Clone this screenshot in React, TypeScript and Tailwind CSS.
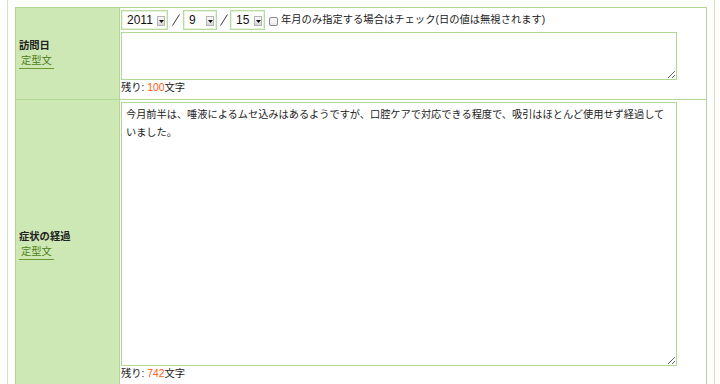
import React from "react";

const FONT = { fontFamily: '"Liberation Sans", "Noto Sans CJK JP", sans-serif' };

function Sel({ value, w }: { value: string; w: string }) {
  return (
    <div className={`relative h-[20px] ${w} border border-[#b9dba0] bg-white flex items-center`}>
      <div className="absolute inset-0 border border-[#e6f2dc] pointer-events-none" />
      <span className="pl-[5px] text-[12px] leading-none text-[#111]">{value}</span>
      <span className="absolute right-[2px] top-[5px] w-[8px] h-[10px] bg-gradient-to-b from-[#fbfbfb] to-[#d6d6d6] border border-[#b4b4b4] flex items-center justify-center">
        <svg width="5" height="3" viewBox="0 0 5 3">
          <path d="M0 0 L5 0 L2.5 3 Z" fill="#111" />
        </svg>
      </span>
    </div>
  );
}

function Slash({ w }: { w: string }) {
  return (
    <span className={`${w} flex justify-center`}>
      <svg width="8" height="12" viewBox="0 0 8 12">
        <path d="M7.5 0.5 L0.5 11.5" stroke="#333" strokeWidth="1" fill="none" />
      </svg>
    </span>
  );
}

function Remain({ n }: { n: string }) {
  return (
    <div className="text-[10.3px] leading-[16px] text-[#222]">
      残り: <span className="text-[#ff5a0a]">{n}</span>文字
    </div>
  );
}

function Label({ title }: { title: string }) {
  return (
    <div className="flex flex-col">
      <span className="text-[10.3px] font-bold leading-[15px] text-[#222] pl-[3px]">{title}</span>
      <span className="mt-[1px] ml-[3px] w-fit px-[2px] text-[10.3px] leading-[14px] text-[#4f7f16] border-b border-[#6a9a30]">
        定型文
      </span>
    </div>
  );
}

export default function App() {
  return (
    <div className="w-[720px] h-[384px] overflow-hidden bg-white" style={FONT}>
      <div className="ml-[7px] w-[708px] h-[384px] border-x border-[#cfe6bd] pl-[7px] pt-[7px]">
        <div className="w-[692px] border-t border-l border-[#b3d896]">
          {/* Row 1 */}
          <div className="grid grid-cols-[104px_1fr]">
            <div className="bg-[#cde8b4] border-r border-b border-[#b3d896] h-[92px] flex items-center">
              <Label title="訪問日" />
            </div>
            <div className="border-r border-b border-[#b3d896] pl-[1px] pt-[2px]">
              <div className="flex items-center h-[20px]">
                <Sel value="2011" w="w-[47px]" />
                <Slash w="w-[15px]" />
                <Sel value="9" w="w-[34px]" />
                <Slash w="w-[13px]" />
                <Sel value="15" w="w-[35px]" />
                <span className="ml-[4px] mr-[3px] mt-[3px] w-[9px] h-[9px] rounded-[2px] border border-[#8a8a8a] bg-gradient-to-b from-white to-[#e8e8e8]" />
                <span className="text-[10.3px] leading-none text-[#222]">
                  年月のみ指定する場合はチェック(日の値は無視されます)
                </span>
              </div>
              <textarea
                className="block mt-[2px] w-[556px] h-[48px] border border-[#b3d896] bg-white outline-none resize"
                defaultValue=""
              />
              <Remain n="100" />
            </div>
          </div>
          {/* Row 2 */}
          <div className="grid grid-cols-[104px_1fr]">
            <div className="bg-[#cde8b4] border-r border-b border-[#b3d896] h-[290px] flex items-center">
              <Label title="症状の経過" />
            </div>
            <div className="border-r border-b border-[#b3d896] pl-[1px] pt-[2px]">
              <textarea
                className="block w-[556px] h-[264px] border border-[#b3d896] bg-white outline-none resize pl-[4px] pr-[4px] pt-[2px] text-[10.2px] leading-[18px] text-[#222]"
                style={{ fontFamily: '"Noto Sans CJK JP", "Liberation Sans", sans-serif' }}
                defaultValue="今月前半は、唾液によるムセ込みはあるようですが、口腔ケアで対応できる程度で、吸引はほとんど使用せず経過していました。"
              />
              <Remain n="742" />
            </div>
          </div>
        </div>
      </div>
    </div>
  );
}
